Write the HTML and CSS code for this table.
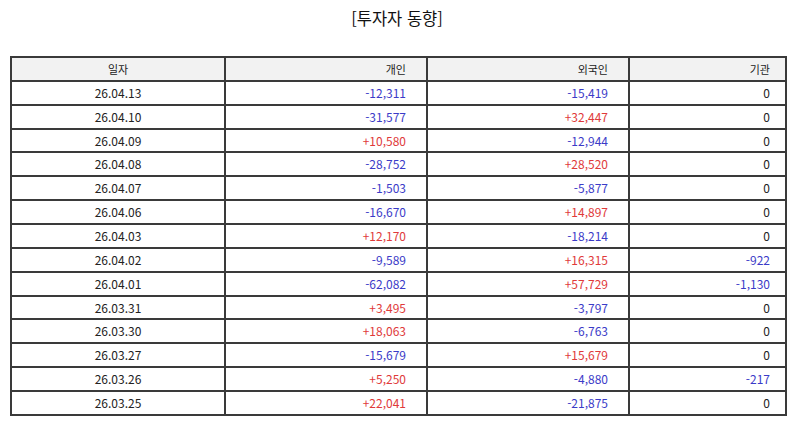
FILE: index.html
```html
<!DOCTYPE html>
<html lang="ko">
<head>
<meta charset="utf-8">
<title>투자자 동향</title>
<link rel="stylesheet" href="styles.css">
</head>
<body>
<h1 class="title">[투자자 동향]</h1>
<table class="grid">
<colgroup>
<col class="c-date"><col class="c-ind"><col class="c-for"><col class="c-inst">
</colgroup>
<thead>
<tr><th class="center">일자</th><th>개인</th><th>외국인</th><th>기관</th></tr>
</thead>
<tbody>
<tr><td class="center">26.04.13</td><td class="neg">-12,311</td><td class="neg">-15,419</td><td>0</td></tr>
<tr><td class="center">26.04.10</td><td class="neg">-31,577</td><td class="pos">+32,447</td><td>0</td></tr>
<tr><td class="center">26.04.09</td><td class="pos">+10,580</td><td class="neg">-12,944</td><td>0</td></tr>
<tr><td class="center">26.04.08</td><td class="neg">-28,752</td><td class="pos">+28,520</td><td>0</td></tr>
<tr><td class="center">26.04.07</td><td class="neg">-1,503</td><td class="neg">-5,877</td><td>0</td></tr>
<tr><td class="center">26.04.06</td><td class="neg">-16,670</td><td class="pos">+14,897</td><td>0</td></tr>
<tr><td class="center">26.04.03</td><td class="pos">+12,170</td><td class="neg">-18,214</td><td>0</td></tr>
<tr><td class="center">26.04.02</td><td class="neg">-9,589</td><td class="pos">+16,315</td><td class="neg">-922</td></tr>
<tr><td class="center">26.04.01</td><td class="neg">-62,082</td><td class="pos">+57,729</td><td class="neg">-1,130</td></tr>
<tr><td class="center">26.03.31</td><td class="pos">+3,495</td><td class="neg">-3,797</td><td>0</td></tr>
<tr><td class="center">26.03.30</td><td class="pos">+18,063</td><td class="neg">-6,763</td><td>0</td></tr>
<tr><td class="center">26.03.27</td><td class="neg">-15,679</td><td class="pos">+15,679</td><td>0</td></tr>
<tr><td class="center">26.03.26</td><td class="pos">+5,250</td><td class="neg">-4,880</td><td class="neg">-217</td></tr>
<tr><td class="center">26.03.25</td><td class="pos">+22,041</td><td class="neg">-21,875</td><td>0</td></tr>
</tbody>
</table>
</body>
</html>
```
FILE: styles.css
```css
html, body {
  margin: 0;
  padding: 0;
  background: #ffffff;
}
body {
  font-family: "Noto Sans CJK KR", "Noto Sans", sans-serif;
  color: #222222;
}
.title {
  margin: 0;
  height: 56px;
  padding-top: 6px;
  box-sizing: border-box;
  font-size: 16.5px;
  font-weight: normal;
  line-height: 24px;
  text-align: center;
  color: #111111;
}
.grid {
  border-collapse: collapse;
  margin: 0 0 0 10px;
  width: 776px;
  table-layout: fixed;
  font-size: 12px;
}
.c-date { width: 214px; }
.c-ind { width: 202px; }
.c-for { width: 202px; }
.c-inst { width: 157px; }
.grid th, .grid td {
  border: 2px solid #3a3a3a;
  height: 23.87px;
  padding: 0 20px 0 0;
  text-align: right;
  font-weight: normal;
  line-height: 14px;
  box-sizing: border-box;
}
.grid td:last-child, .grid th:last-child {
  padding-right: 15px;
}
.grid thead th {
  background: #f2f2f2;
  font-size: 11px;
}
.grid .center {
  text-align: center;
  padding: 0;
}
.neg { color: #3b3bc8; }
.pos { color: #e03a3a; }
```
